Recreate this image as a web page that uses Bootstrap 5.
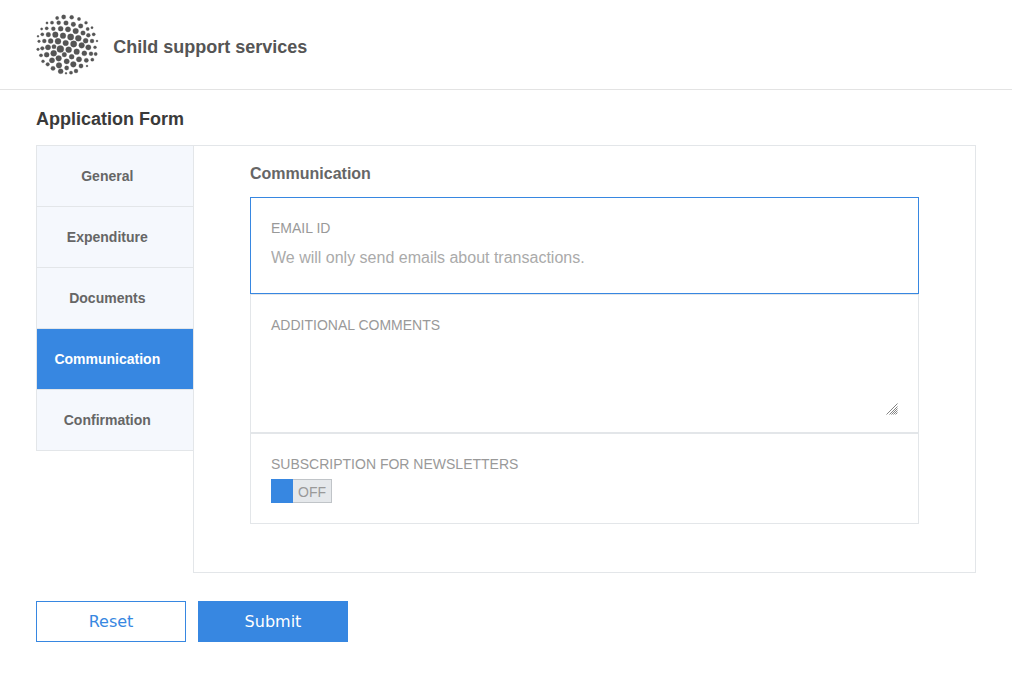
<!DOCTYPE html>
<html lang="en">
<head>
<meta charset="utf-8">
<meta name="viewport" content="width=device-width, initial-scale=1">
<title>Child support services</title>
<link rel="stylesheet" href="https://cdn.jsdelivr.net/npm/bootstrap@5.3.0/dist/css/bootstrap.min.css">
<style>
:root { --accent: #3787e1; --line: #e3e6e9; }
body { font-family: "Liberation Sans", Arial, sans-serif; color: #666; }
.page { width: 1012px; }
.site-header { height: 90px; border-bottom: 1px solid #e3e3e3; padding: 8px 0 0 30px; }
.logo { fill: #555; stroke: #555; stroke-width: .8; flex: none; }
.brand { font-size: 18px; line-height: 22px; font-weight: bold; color: #555; margin: 28px 0 0 7.3px; }
.form-wrap { padding: 0 36px; }
.form-title { font-size: 18px; line-height: 22px; font-weight: bold; color: #3a3a3a; margin: 18px 0 15px; }
.tabs { width: 157px; border: 1px solid var(--line); border-width: 1px 0 0 1px; }
.tabs .nav-link { height: 61px; padding: 0 15.4px 0 0; font-size: 14px; line-height: 60px; font-weight: bold; text-align: center; color: #666; background: #f5f8fd; border-bottom: 1px solid var(--line); border-radius: 0; transition: none; }
.tabs .nav-link.active { background: var(--accent); color: #fff; }
.pane { height: 428px; border: 1px solid var(--line); padding: 18px 56px 0; }
.pane-title { font-size: 16px; line-height: 20px; font-weight: bold; color: #666; margin: 0 0 13px; }
.field { border: 1px solid var(--line); padding: 20px 20px 0; }
.field.focused { border-color: var(--accent); }
.field label { font-size: 14px; line-height: 20px; color: #999; }
.field .form-control { border: 0; border-radius: 0; padding: 0; font-size: 16px; background: transparent; box-shadow: none; }
.field ::placeholder { color: #aaa !important; }
.h-email { height: 97px; }
.h-email input { height: 24px; line-height: 24px; margin-top: 8px; }
.h-notes { height: 139px; }
.h-notes textarea { height: 80px; min-height: 0; resize: none; }
.grip { right: 0; bottom: 0; stroke: #777; stroke-width: .9; pointer-events: none; }
.h-news { height: 91px; }
.toggle { width: 61px; height: 24px; margin-top: 5px; background: #e5e8eb; border: 1px solid #c0c4c8; border-left: 0; font-size: 14px; color: #999; }
.toggle .knob { width: 22px; height: 24px; margin: -1px 0; background: var(--accent); }
.toggle .state { padding-left: 5px; line-height: 24px; }
.actions { gap: 12px; margin-top: 28px; }
.actions .btn { width: 150px; height: 41px; padding: 0; border: 1px solid var(--accent); border-radius: 0; font: 16px/39px "DejaVu Sans", sans-serif; color: var(--accent); background: #fff; }
.actions .btn.send { background: var(--accent); color: #fff; }
</style>
</head>
<body class="bg-white">
<div class="page">
  <header class="site-header d-flex align-items-start">
    <svg class="logo" width="76" height="72" viewBox="0 0 228 216" aria-hidden="true">
      <circle cx="81.500" cy="30" r="5"/><circle cx="101" cy="27" r="6.500"/><circle cx="125" cy="28" r="6"/><circle cx="147" cy="33" r="5"/>
      <circle cx="51" cy="45" r="3.500"/><circle cx="66" cy="44" r="5"/><circle cx="86" cy="44" r="6"/><circle cx="108" cy="45" r="7"/><circle cx="130" cy="49" r="7"/><circle cx="152" cy="54" r="7"/><circle cx="168" cy="44" r="4.500"/>
      <circle cx="35" cy="63" r="3.500"/><circle cx="50" cy="61" r="5"/><circle cx="70" cy="62" r="6"/><circle cx="92" cy="62" r="7.500"/><circle cx="114" cy="64" r="8"/><circle cx="137" cy="69" r="8.500"/><circle cx="159" cy="75" r="7"/><circle cx="173" cy="63" r="5"/><circle cx="186" cy="59" r="3.500"/>
      <circle cx="24" cy="85" r="3"/><circle cx="37" cy="79" r="5"/><circle cx="55" cy="80" r="7"/><circle cx="76" cy="80" r="8.500"/><circle cx="99" cy="83" r="8.500"/><circle cx="122" cy="87" r="9.500"/><circle cx="145" cy="91" r="9"/><circle cx="175" cy="82" r="6"/><circle cx="191" cy="79" r="5"/>
      <circle cx="27" cy="100" r="4"/><circle cx="43" cy="99" r="6"/><circle cx="62" cy="99" r="7.500"/><circle cx="84" cy="100" r="9"/><circle cx="107" cy="105" r="8.500"/><circle cx="131" cy="108" r="9.500"/><circle cx="167" cy="98" r="7.500"/><circle cx="186" cy="99" r="6"/><circle cx="201" cy="99" r="3"/>
      <circle cx="24" cy="124" r="4"/><circle cx="37" cy="121" r="5.500"/><circle cx="54" cy="118" r="8"/><circle cx="72" cy="116" r="6.500"/><circle cx="91" cy="123" r="10.500"/><circle cx="116" cy="125" r="9"/><circle cx="155" cy="112" r="8.500"/><circle cx="175" cy="118" r="8"/><circle cx="195" cy="118" r="4.500"/>
      <circle cx="33" cy="142" r="5"/><circle cx="50" cy="140" r="7.500"/><circle cx="71" cy="136" r="9"/><circle cx="103" cy="140" r="7"/><circle cx="125" cy="146" r="7.500"/><circle cx="140" cy="131" r="8.500"/><circle cx="163" cy="136" r="7.500"/><circle cx="183" cy="137" r="6"/><circle cx="197" cy="138" r="5"/>
      <circle cx="39" cy="160" r="4.500"/><circle cx="66" cy="157" r="8"/><circle cx="86" cy="151" r="8.500"/><circle cx="110" cy="160" r="8"/><circle cx="147" cy="154" r="8"/><circle cx="169" cy="157" r="6.500"/><circle cx="187" cy="155" r="5"/>
      <circle cx="53" cy="169" r="5.500"/><circle cx="87" cy="172" r="8.500"/><circle cx="130" cy="169" r="8.500"/><circle cx="153" cy="174" r="6.500"/><circle cx="171" cy="174" r="3"/>
      <circle cx="69" cy="181" r="6.500"/><circle cx="110" cy="180" r="6.500"/><circle cx="138" cy="189" r="6"/><circle cx="92" cy="190" r="7.500"/><circle cx="108" cy="196" r="3"/><circle cx="123" cy="194" r="5"/>
    </svg>
    <h1 class="brand">Child support services</h1>
  </header>
  <main class="form-wrap">
    <h2 class="form-title">Application Form</h2>
    <form>
      <div class="d-flex align-items-start">
        <nav class="tabs nav flex-column flex-shrink-0">
          <a class="nav-link" href="#">General</a>
          <a class="nav-link" href="#">Expenditure</a>
          <a class="nav-link" href="#">Documents</a>
          <a class="nav-link active" href="#">Communication</a>
          <a class="nav-link" href="#">Confirmation</a>
        </nav>
        <section class="pane flex-grow-1">
          <h3 class="pane-title">Communication</h3>
          <div class="field focused h-email">
            <label class="d-block" for="email">EMAIL ID</label>
            <input class="form-control" id="email" type="email" placeholder="We will only send emails about transactions.">
          </div>
          <div class="field h-notes">
            <label class="d-block" for="notes">ADDITIONAL COMMENTS</label>
            <div class="position-relative">
              <textarea class="form-control" id="notes"></textarea>
              <svg class="grip position-absolute" width="12" height="12" viewBox="0 0 12 12" aria-hidden="true"><path d="M.5 11.500L11.500 .5M3.500 11.500L11.500 3.500M5.500 11.500L11.500 5.500M7.500 11.500L11.500 7.500M9.500 11.500L11.500 9.500"/></svg>
            </div>
          </div>
          <div class="field h-news">
            <label class="d-block">SUBSCRIPTION FOR NEWSLETTERS</label>
            <div class="toggle d-flex" role="switch" aria-checked="false"><span class="knob"></span><span class="state">OFF</span></div>
          </div>
        </section>
      </div>
      <div class="actions d-flex">
        <button class="btn" type="reset">Reset</button>
        <button class="btn send" type="button">Submit</button>
      </div>
    </form>
  </main>
</div>
<script src="https://cdn.jsdelivr.net/npm/bootstrap@5.3.0/dist/js/bootstrap.bundle.min.js"></script>
</body>
</html>
